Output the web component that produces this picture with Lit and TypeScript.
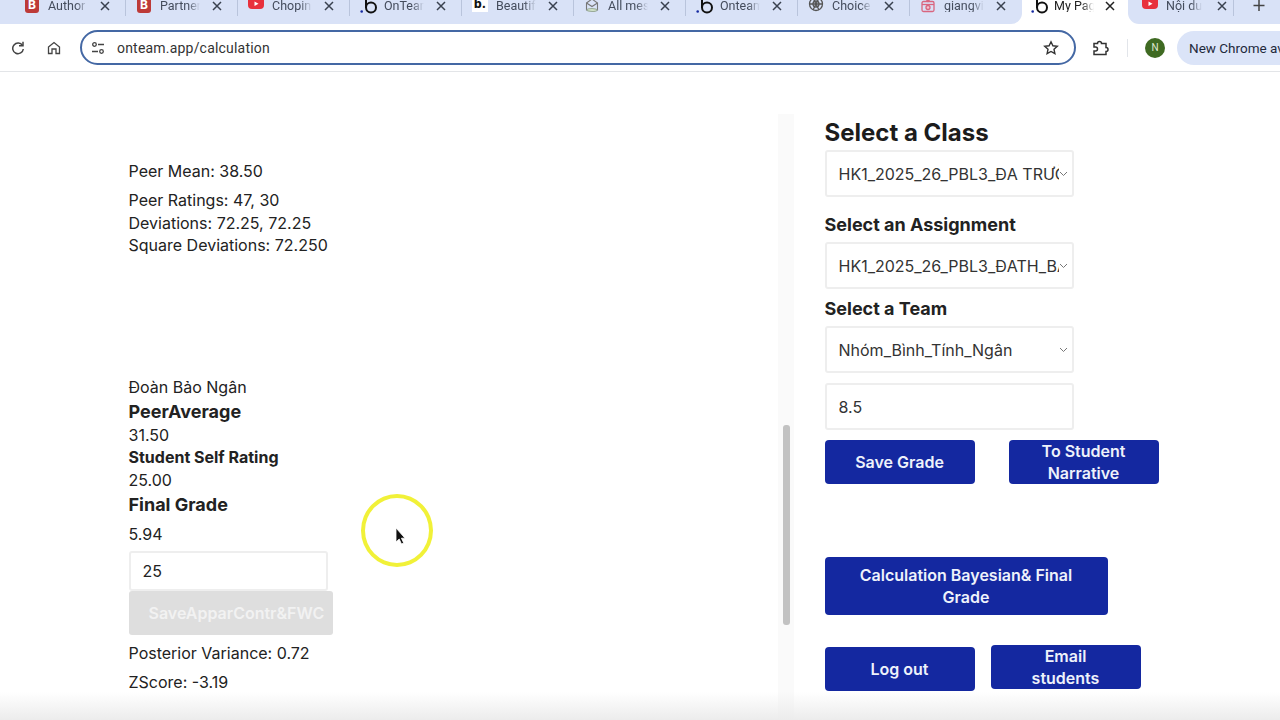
import { LitElement, html, css, svg } from "lit";
import { customElement } from "lit/decorators.js";

const bIcon = html`<svg class="ico" viewBox="0 0 16 16"><rect x="1" y="-3" width="14" height="18" rx="3" fill="#bd3a38"/><text x="8" y="11" text-anchor="middle" font-size="12" font-weight="700" font-family="Inter" fill="#fff">B</text></svg>`;
const ytIcon = html`<svg class="ico" viewBox="0 0 16 16"><rect x="0" y="-4" width="16" height="15" rx="4" fill="#e8303c"/><path d="M6.500 3.500v4.500l4-2.200z" fill="#fff"/></svg>`;
const bLogo = html`<svg class="ico" viewBox="0 0 16 16"><path d="M6-3v13" stroke="#111" stroke-width="2" fill="none"/><circle cx="11" cy="9.500" r="5" stroke="#111" stroke-width="2" fill="none"/><circle cx="1.700" cy="13.500" r="1.300" fill="#1428a0"/></svg>`;
const bSq = html`<svg class="ico" viewBox="0 0 16 16"><rect width="16" height="16" y="-2" fill="#fff"/><text x="8" y="10" text-anchor="middle" font-size="12" font-weight="800" font-family="Inter" fill="#111">b.</text></svg>`;
const mailIcon = html`<svg class="ico" viewBox="0 0 16 16" fill="none" stroke="#777" stroke-width="1.100"><path d="M2.500 5 8 1l5.500 4v7h-11z"/><path d="M2.500 5 8 8.500 13.500 5"/><ellipse cx="8" cy="12" rx="5" ry="1.500" fill="#cfe0c8" stroke="#9a9"/></svg>`;
const knotIcon = html`<svg class="ico" viewBox="0 0 16 16" fill="none" stroke="#555" stroke-width="1.300"><circle cx="8" cy="6" r="6.500"/><path d="M5 0l6 12M11 0 5 12M1.500 6h13"/><circle cx="8" cy="6" r="3"/></svg>`;
const pinkIcon = html`<svg class="ico" viewBox="0 0 16 16" fill="none" stroke="#d9657f" stroke-width="1.300"><rect x="2" y="3.500" width="12" height="10" rx="1.500"/><path d="M5 0 8 3.500 11 0"/><circle cx="8" cy="9.500" r="2" fill="#f4c2cd"/><path d="M2 6.500h12"/></svg>`;

const closeX = html`<svg class="x" viewBox="0 0 10 10" fill="none" stroke="currentColor" stroke-width="1.500"><path d="M1 1l8 8M9 1 1 9"/></svg>`;

@customElement("app-root")
export class AppRoot extends LitElement {
  static styles = css`
    :host { display: block; width: 1280px; height: 720px; overflow: hidden; position: relative; background: #fff; font-family: Inter, "Noto Sans", sans-serif; color: #222; }
    * { box-sizing: border-box; }

    .strip { display: flex; height: 24px; background: #fff; }
    .seg { display: flex; background: #d9e2f7; height: 24px; align-items: flex-start; }
    .seg.lead { width: 1022px; padding-left: 14px; border-bottom-right-radius: 11px; flex: none; }
    .seg.trail { flex: 1; padding-left: 0; border-bottom-left-radius: 11px; }
    .tab { position: relative; width: 112px; height: 12px; display: flex; align-items: center; padding-left: 10px; color: #444c5c; flex: none; overflow: visible; }
    .tab.sep::after { content: ""; position: absolute; right: 0; top: 0; width: 1px; height: 16px; background: #b9c4dc; }
    .ico { width: 16px; height: 16px; flex: none; overflow: visible; margin-right: 8px; }
    .tab-label { width: 40px; flex: none; font: 12.500px/12px Roboto, sans-serif; white-space: nowrap; overflow: hidden; -webkit-mask-image: linear-gradient(90deg, #000 70%, transparent); mask-image: linear-gradient(90deg, #000 70%, transparent); }
    .x { width: 10px; height: 10px; flex: none; margin-left: 12px; color: #39414f; }
    .active { width: 106px; height: 24px; display: flex; align-items: flex-start; background: #fff; color: #222; flex: none; }
    .active .tab { width: 106px; padding-left: 9px; color: #222; }
    .active .ico { margin-right: 7px; }
    .active .x { margin-left: 11px; color: #222; }
    .trail .tab { width: 106px; padding-left: 14px; }
    .trail .tab .tab-label { width: 36px; }
    .trail .tab .x { margin-left: 15px; }
    .plus { width: 12px; height: 12px; flex: none; margin-left: 19px; color: #444; }

    .toolbar { height: 48px; display: flex; align-items: center; border-bottom: 1px solid #e3e5e8; background: #fff; padding-left: 11px; color: #444; }
    .tool { width: 14px; height: 14px; flex: none; }
    .home { margin-left: 22px; }
    .omni { margin-left: 19px; width: 996px; height: 35px; border: 2px solid #4468a4; border-radius: 18px; display: flex; align-items: center; padding: 0 15px 0 9px; flex: none; }
    .tune { width: 14px; height: 14px; flex: none; }
    .url { margin-left: 12px; flex: 1; font: 14px Roboto, sans-serif; color: #333; letter-spacing: 0.2px; }
    .star { width: 16px; height: 16px; flex: none; }
    .ext { margin-left: 15px; width: 18px; height: 18px; flex: none; }
    .vsep { margin-left: 18px; width: 1px; height: 18px; background: #e2e5ea; flex: none; }
    .avatar { margin-left: 17px; width: 20px; height: 20px; border-radius: 50%; background: #3f6a22; color: #dfe8d0; font: 10px/20px Roboto, sans-serif; text-align: center; flex: none; }
    .chip { margin-left: 12px; flex: 1; height: 34px; background: #dbe4f8; border-radius: 17px 0 0 17px; padding-left: 12px; font: 13.500px/34px Roboto, sans-serif; color: #1f2a3c; white-space: nowrap; overflow: hidden; }

    .page { display: flex; height: 648px; }
    .main { width: 778px; flex: none; padding: 88px 0 0 128.500px; font-size: 16px; line-height: 22.400px; }
    .rail { width: 16px; flex: none; margin-top: 42px; background: #fafafa; position: relative; }
    .thumb { position: absolute; left: 5px; top: 311px; width: 7px; height: 200px; background: #c2c2c2; border-radius: 3px; }
    .side { padding: 45px 0 0 30.500px; flex: 1; }

    .line { white-space: nowrap; }
    .m1 { margin-top: 7px; }
    .gap-name { margin-top: 119px; }
    h3 { margin: 1px 0 0; font-size: 18px; line-height: 25px; font-weight: 700; color: #222; }
    h4 { margin: 0; font-size: 16px; line-height: 22.400px; font-weight: 700; }
    .fg { margin-top: 1px; }
    .fg-val { margin-top: 6px; }
    .num { width: 199.500px; height: 40px; margin-top: 5px; border: 2px solid #eee; border-radius: 3px; padding-left: 12px; font-size: 16px; line-height: 36px; background: #fff; }
    .btn-dis { width: 204px; height: 44px; background: #dedede; border-radius: 3px; color: #f2f2f2; font-size: 16px; font-weight: 600; line-height: 44px; padding-left: 20px; white-space: nowrap; overflow: hidden; }
    .post { margin-top: 7px; }
    .z { margin-top: 7px; }

    h2 { margin: 0; font-size: 24px; line-height: 32px; font-weight: 700; color: #1c1c1c; }
    h5 { margin: 0; font-size: 18px; line-height: 25px; font-weight: 700; color: #222; }
    .field { width: 249.500px; height: 47px; border: 2px solid #eee; border-radius: 3px; display: flex; align-items: center; padding: 0 4px 0 12px; font-size: 16px; color: #333; background: #fff; }
    .ftext { flex: 1; min-width: 0; overflow: hidden; white-space: nowrap; }
    .chev { width: 9px; height: 6px; flex: none; }
    .mt1 { margin-top: 1px; }
    .mt15 { margin-top: 15px; }
    .mt5 { margin-top: 5px; }
    .mt7 { margin-top: 7px; }
    .mt10 { margin-top: 10px; }
    .row { display: flex; }
    .btn { width: 150px; height: 44px; padding: 0 20px; background: #1428a0; border-radius: 4px; color: #eef2fb; font-size: 16px; font-weight: 600; line-height: 22.400px; display: flex; align-items: center; justify-content: center; text-align: center; }
    .r1 { margin-top: 10px; gap: 34px; }
    .calc { width: 283px; height: 58px; margin-top: 73px; }
    .r3 { margin-top: 32px; gap: 16px; align-items: flex-start; }
    .up { margin-top: -2px; }

    .spot { position: absolute; left: 361px; top: 494px; width: 72px; height: 73px; border: 4px solid #f1f138; border-radius: 50%; }
    .cursor { position: absolute; left: 395px; top: 527px; width: 11px; height: 18px; }
    .fade { position: absolute; left: 0; right: 0; bottom: 0; height: 28px; background: linear-gradient(#ffffff00, #ececec); }
  `;

  private tab(ic: unknown, t: string, sep = true) {
    return html`<div class="tab ${sep ? "sep" : ""}">${ic}<span class="tab-label">${t}</span>${closeX}</div>`;
  }

  render() {
    return html`
      <div class="strip">
        <div class="seg lead">
          ${this.tab(bIcon, "Author")}
          ${this.tab(bIcon, "Partner")}
          ${this.tab(ytIcon, "Chopin")}
          ${this.tab(bLogo, "OnTeam")}
          ${this.tab(bSq, "Beautiful")}
          ${this.tab(mailIcon, "All messages")}
          ${this.tab(bLogo, "Onteam")}
          ${this.tab(knotIcon, "Choice")}
          ${this.tab(pinkIcon, "giangvien", false)}
        </div>
        <div class="active">${this.tab(bLogo, "My Page", false)}</div>
        <div class="seg trail">
          <div class="tab sep">${ytIcon}<span class="tab-label">Nội dung</span>${closeX}</div>
          <svg class="plus" viewBox="0 0 12 12" fill="none" stroke="currentColor" stroke-width="1.500"><path d="M6 0v11M.5 5.500h11"/></svg>
        </div>
      </div>

      <div class="toolbar">
        <svg class="tool" viewBox="0 0 14 14" fill="none" stroke="currentColor" stroke-width="1.500"><path d="M11.500 4.500A5.300 5.300 0 1 0 12.300 8"/><path d="M12 .8v4h-4" /></svg>
        <svg class="tool home" viewBox="0 0 14 14" fill="none" stroke="currentColor" stroke-width="1.300"><path d="M1.500 6 7 1.500 12.500 6v6.500h-3.500V8H5v4.500H1.500z"/></svg>
        <div class="omni">
          <svg class="tune" viewBox="0 0 14 14" fill="none" stroke="#444" stroke-width="1.300"><circle cx="3.500" cy="3.500" r="1.800"/><path d="M7 3.500h6M1 10.500h6"/><circle cx="10.500" cy="10.500" r="1.800"/></svg>
          <div class="url">onteam.app/calculation</div>
          <svg class="star" viewBox="0 0 16 16" fill="none" stroke="#333" stroke-width="1.400"><path d="M8 1.800l1.900 4 4.400.5-3.300 3 .9 4.400L8 11.500l-3.900 2.200.9-4.400-3.300-3 4.400-.5z"/></svg>
        </div>
        <svg class="ext" viewBox="0 0 18 18" fill="none" stroke="#333" stroke-width="1.500"><path d="M3 5h3.500a2 2 0 0 1 4 0H15v4a2 2 0 0 1 0 4v3H3v-3.500h1.500a2 2 0 0 0 0-4H3z" transform="translate(0 -.5)"/></svg>
        <div class="vsep"></div>
        <div class="avatar">N</div>
        <div class="chip">New Chrome available</div>
      </div>

      <div class="page">
        <div class="main">
          <div class="line">Peer Mean: 38.50</div>
          <div class="line m1">Peer Ratings: 47, 30</div>
          <div class="line">Deviations: 72.25, 72.25</div>
          <div class="line">Square Deviations: 72.250</div>
          <div class="line gap-name">Đoàn Bảo Ngân</div>
          <h3>PeerAverage</h3>
          <div class="line">31.50</div>
          <h4>Student Self Rating</h4>
          <div class="line">25.00</div>
          <h3 class="fg">Final Grade</h3>
          <div class="line fg-val">5.94</div>
          <div class="num">25</div>
          <div class="btn-dis">SaveApparContr&amp;FWC</div>
          <div class="line post">Posterior Variance: 0.72</div>
          <div class="line z">ZScore: -3.19</div>
        </div>
        <div class="rail"><div class="thumb"></div></div>
        <div class="side">
          <h2>Select a Class</h2>
          <div class="field mt1"><span class="ftext">HK1_2025_26_PBL3_ĐA TRƯỜNG</span>${this.chev()}</div>
          <h5 class="mt15">Select an Assignment</h5>
          <div class="field mt5">
            <span class="ftext">HK1_2025_26_PBL3_ĐATH_BÀI</span>${this.chev()}
          </div>
          <h5 class="mt7">Select a Team</h5>
          <div class="field mt5"><span class="ftext">Nhóm_Bình_Tính_Ngân</span>${this.chev()}</div>
          <div class="field mt10"><span class="ftext">8.5</span></div>
          <div class="row r1">
            <div class="btn">Save Grade</div>
            <div class="btn">To Student Narrative</div>
          </div>
          <div class="btn calc">Calculation Bayesian&amp; Final Grade</div>
          <div class="row r3">
            <div class="btn">Log out</div>
            <div class="btn up">Email students</div>
          </div>
        </div>
      </div>

      <div class="fade"></div>
      <div class="spot"></div>
      <svg class="cursor" viewBox="0 0 11 18"><path d="M1 1v14l3.200-3 2.300 5 2.200-1-2.300-4.800H10z" fill="#111" stroke="#fff" stroke-width=".8"/></svg>
    `;
  }

  private chev() {
    return html`<svg class="chev" viewBox="0 0 9 6" fill="none" stroke="#777" stroke-width="1">${svg`<path d="M1 1l3.500 3.500L8 1"/>`}</svg>`;
  }
}
